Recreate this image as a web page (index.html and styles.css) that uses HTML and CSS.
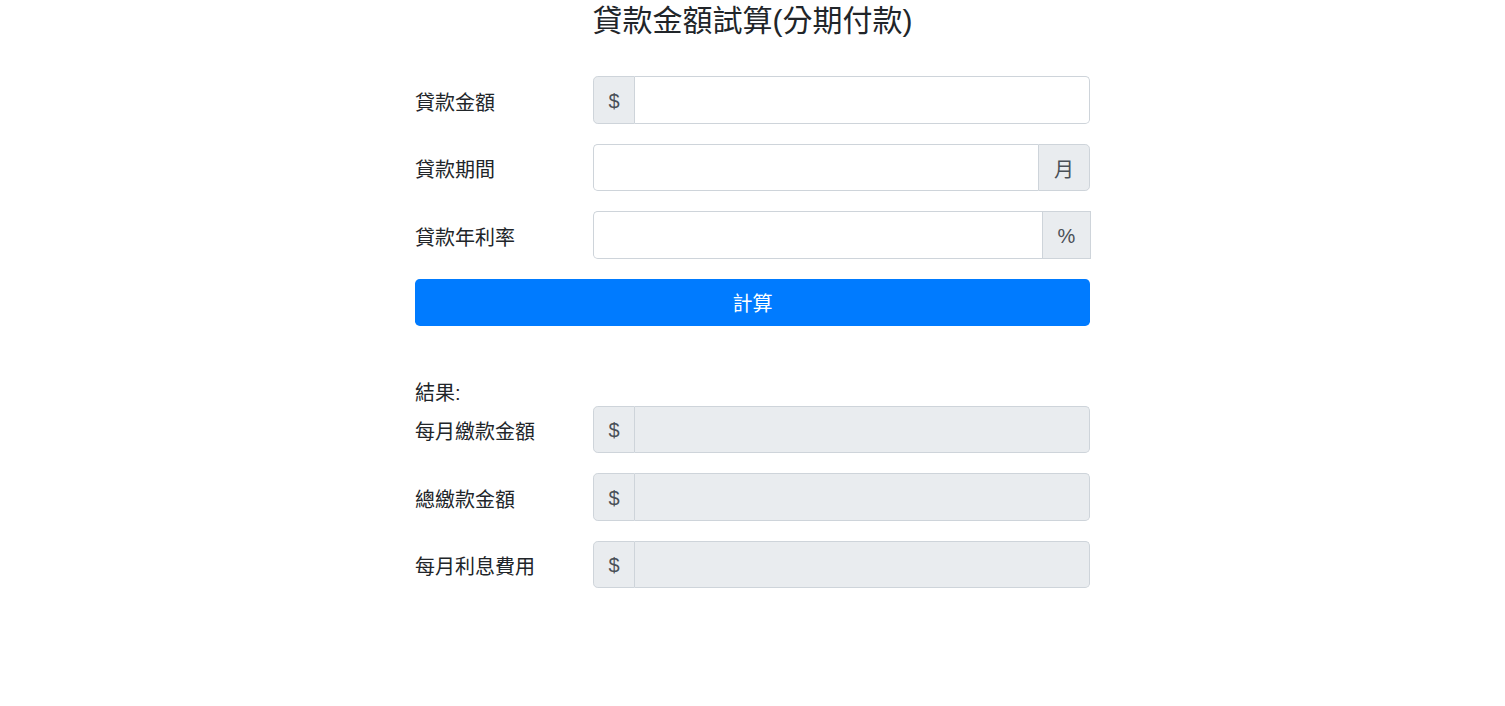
FILE: index.html
```html
<!DOCTYPE html>
<html lang="zh-Hant">
<head>
<meta charset="utf-8">
<title>貸款金額試算</title>
<link rel="stylesheet" href="styles.css">
</head>
<body>
<h3 class="title">貸款金額試算(分期付款)</h3>
<form class="calc">
  <div class="row">
    <label class="label">貸款金額</label>
    <div class="group">
      <span class="addon addon-pre">$</span>
      <input class="field field-end" type="text">
    </div>
  </div>
  <div class="row">
    <label class="label">貸款期間</label>
    <div class="group">
      <input class="field field-start" type="text">
      <span class="addon addon-post addon-month">月</span>
    </div>
  </div>
  <div class="row">
    <label class="label">貸款年利率</label>
    <div class="group group-wide">
      <input class="field field-start" type="text">
      <span class="addon addon-post addon-pct">%</span>
    </div>
  </div>
  <button class="btn" type="button">計算</button>

  <div class="result-title">結果:</div>
  <div class="row">
    <label class="label">每月繳款金額</label>
    <div class="group">
      <span class="addon addon-pre">$</span>
      <input class="field field-end readonly" type="text" readonly>
    </div>
  </div>
  <div class="row">
    <label class="label">總繳款金額</label>
    <div class="group">
      <span class="addon addon-pre">$</span>
      <input class="field field-end readonly" type="text" readonly>
    </div>
  </div>
  <div class="row">
    <label class="label">每月利息費用</label>
    <div class="group">
      <span class="addon addon-pre">$</span>
      <input class="field field-end readonly" type="text" readonly>
    </div>
  </div>
</form>
</body>
</html>
```
FILE: styles.css
```css
body {
  margin: 0;
  font-family: "Liberation Sans", "Noto Sans CJK TC", sans-serif;
  color: #212529;
  background: #fff;
}

.title {
  margin: 0;
  font-size: 30px;
  font-weight: 400;
  line-height: 42px;
  text-align: center;
}

.calc {
  width: 675px;
  margin: 34px auto 0;
}

.row {
  display: grid;
  grid-template-columns: 178px 497px;
  align-items: center;
  height: 47.5px;
  margin-bottom: 20px;
}

.label {
  font-size: 20px;
  line-height: 30px;
  padding-top: 6px;
}

.group {
  display: flex;
  height: 47.5px;
}

.group-wide {
  margin-right: -1px;
}

.addon {
  display: flex;
  align-items: center;
  justify-content: center;
  box-sizing: border-box;
  padding-top: 3px;
  background: #e9ecef;
  border: 1px solid #ced4da;
  color: #495057;
  font-size: 20px;
}

.addon-pre {
  width: 42px;
  border-radius: 4.8px 0 0 4.8px;
}

.addon-post {
  border-radius: 0 4.8px 4.8px 0;
}

.addon-month {
  width: 52px;
}

.addon-pct {
  width: 49px;
  border-radius: 0;
}

.field {
  flex: 1;
  min-width: 0;
  box-sizing: border-box;
  height: 100%;
  border: 1px solid #ced4da;
  background: #fff;
  font-size: 20px;
  padding: 0 16px;
  outline: none;
}

.field-end {
  border-left: none;
  border-radius: 0 4.8px 4.8px 0;
}

.field-start {
  border-right: none;
  border-radius: 4.8px 0 0 4.8px;
}

.readonly {
  background: #e9ecef;
}

.btn {
  display: block;
  width: 100%;
  height: 47px;
  margin: 0;
  padding-top: 2px;
  border: none;
  border-radius: 4.8px;
  background: #007bff;
  color: #fff;
  font-family: "Liberation Sans", "Noto Sans CJK TC", sans-serif;
  font-size: 20px;
}

.result-title {
  margin-top: 52px;
  padding-top: 3px;
  font-size: 20px;
  line-height: 25px;
}
```
